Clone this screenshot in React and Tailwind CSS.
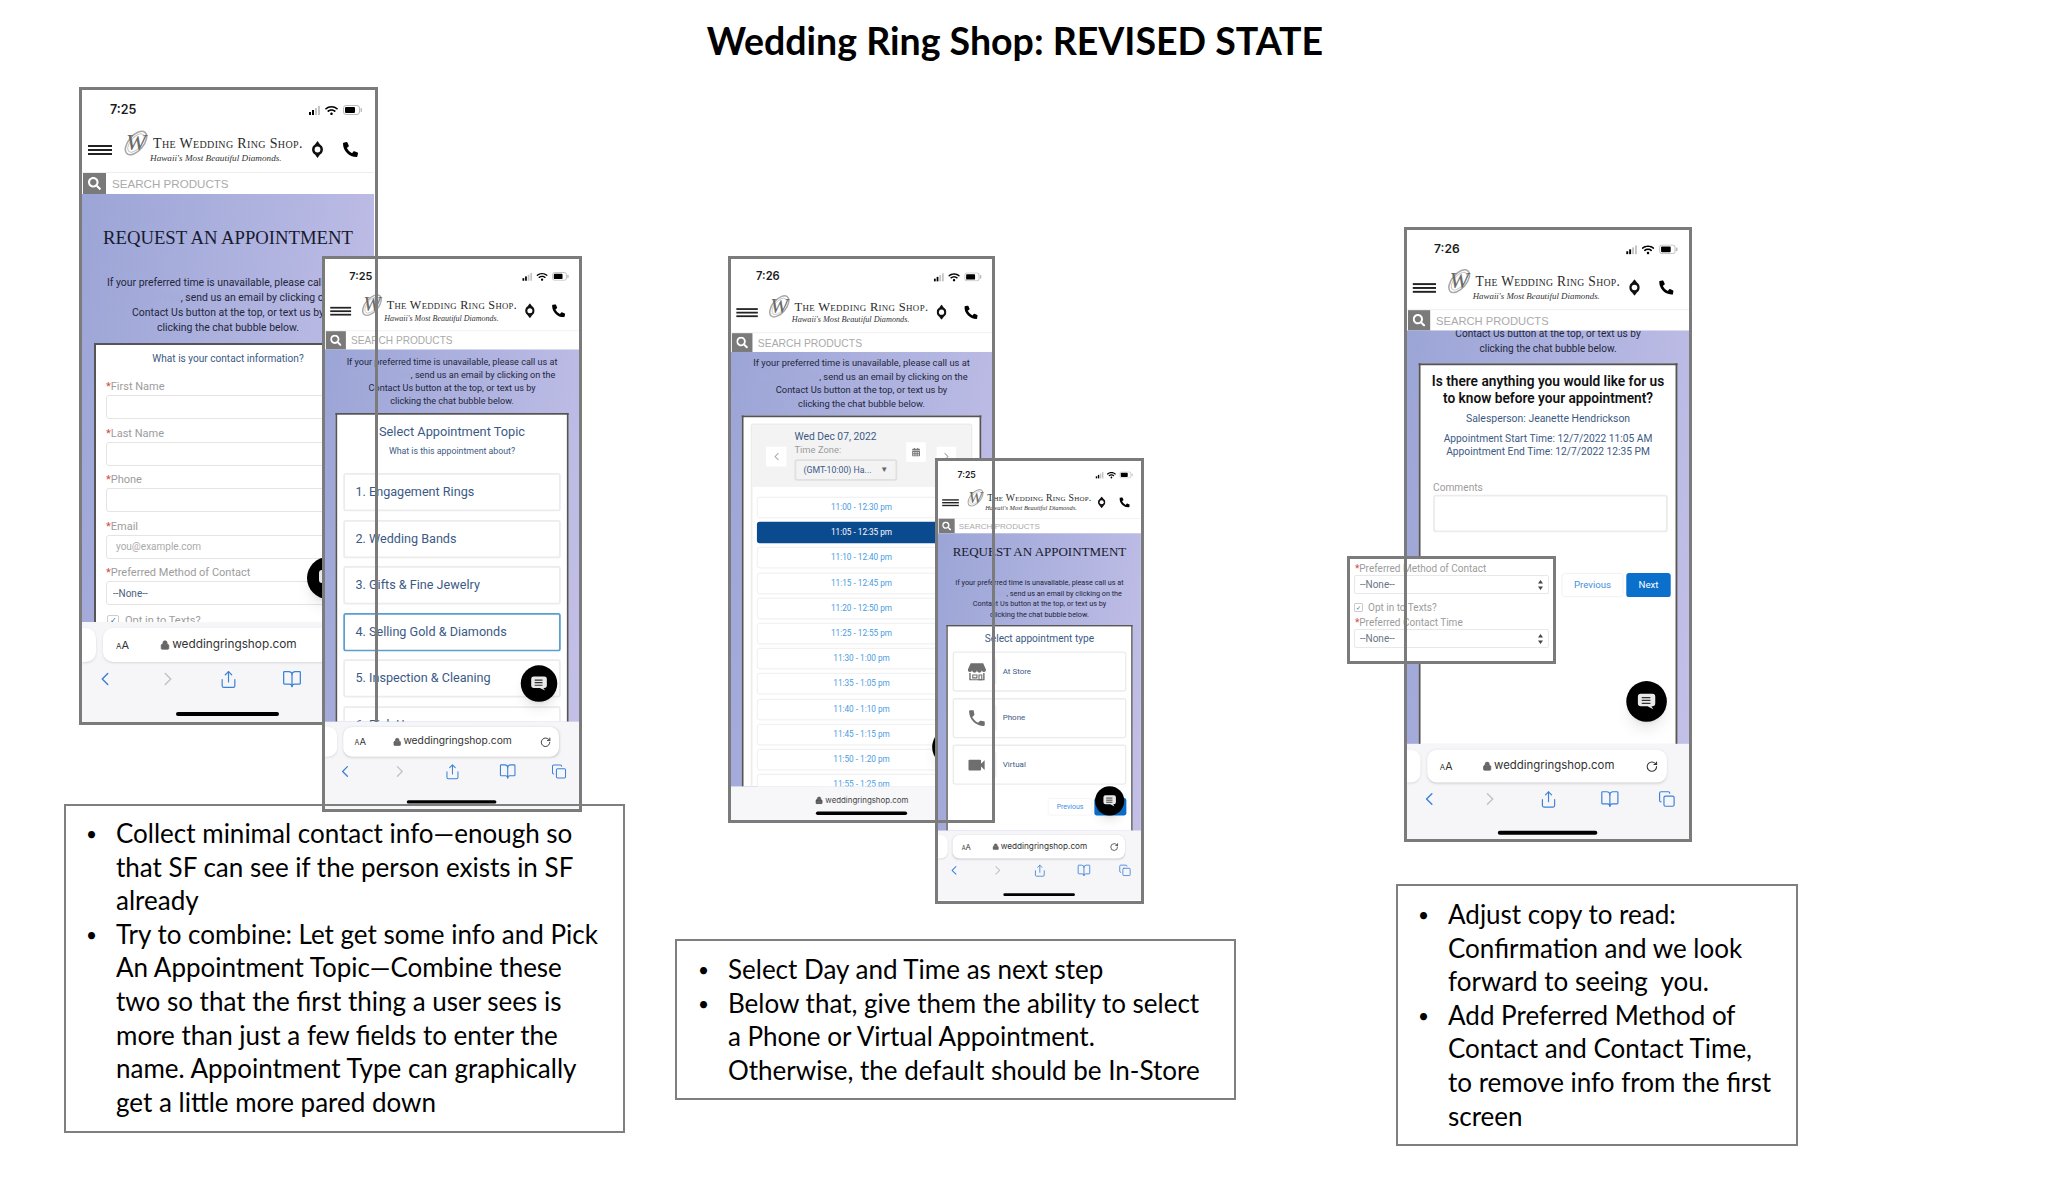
import React from "react";
import { BookOpen, ChevronLeft, ChevronRight, Copy, Lock, RotateCw, Share } from "lucide-react";
import { FaCalendarAlt, FaPhoneAlt, FaSearch, FaWifi } from "react-icons/fa";
import { MdVideocam, MdPhone } from "react-icons/md";

const topics = [
  "1. Engagement Rings",
  "2. Wedding Bands",
  "3. Gifts & Fine Jewelry",
  "4. Selling Gold & Diamonds",
  "5. Inspection & Cleaning",
  "6. Pick Up",
];

const slots = [
  "11:00 - 12:30 pm",
  "11:05 - 12:35 pm",
  "11:10 - 12:40 pm",
  "11:15 - 12:45 pm",
  "11:20 - 12:50 pm",
  "11:25 - 12:55 pm",
  "11:30 - 1:00 pm",
  "11:35 - 1:05 pm",
  "11:40 - 1:10 pm",
  "11:45 - 1:15 pm",
  "11:50 - 1:20 pm",
  "11:55 - 1:25 pm",
];

const StatusBar = ({ time }) => (
  <div className="flex h-[38px] shrink-0 items-center pl-[28px] pr-[11px] pt-[2px]">
    <span className="font-[Inter] text-[12.5px] font-semibold text-[#1c1c1e]">{time}</span>
    <div className="ml-auto flex items-center">
      <div className="flex items-end gap-[1px]">
        <div className="h-[3px] w-[2px] bg-black" />
        <div className="h-[5px] w-[2px] bg-black" />
        <div className="h-[7px] w-[2px] bg-[#c4c4c4]" />
        <div className="h-[9px] w-[2px] bg-[#c4c4c4]" />
      </div>
      <FaWifi className="ml-[5px] text-[13px] text-black" />
      <svg className="ml-[5px]" width="20" height="10" viewBox="0 0 20 10">
        <rect x="0.5" y="0.5" width="16" height="9" rx="2.5" fill="none" stroke="#bbb" />
        <rect x="2" y="2" width="10" height="6" rx="1" fill="#000" />
        <rect x="17.5" y="3" width="1.5" height="4" rx="0.7" fill="#bbb" />
      </svg>
    </div>
  </div>
);

const LogoRow = () => (
  <div className="flex h-[44px] shrink-0 items-start pl-[6px]">
    <div className="mt-[17px] flex w-[24px] flex-col gap-[2px]">
      <div className="h-[2px] bg-[#222]" />
      <div className="h-[2px] bg-[#222]" />
      <div className="h-[2px] bg-[#222]" />
    </div>
    <svg className="ml-[12px] mt-[2px] shrink-0" width="28" height="26" viewBox="0 0 28 26">
      <ellipse cx="12" cy="13" rx="14" ry="7.5" transform="rotate(-50 12 13)" fill="none" stroke="#a8a8a8" strokeWidth="1.6" />
      <ellipse cx="12" cy="13" rx="11" ry="5.5" transform="rotate(-50 12 13)" fill="none" stroke="#c8c8c8" strokeWidth="1" />
      <text x="2" y="20" fontFamily="Liberation Serif" fontStyle="italic" fontSize="24" fill="#6a6a6a">W</text>
    </svg>
    <div className="ml-[1px] mt-[7px] flex w-[158px] flex-col whitespace-nowrap font-['Liberation_Serif',serif]">
      <span className="text-[14px] leading-[18px] tracking-[0.35px] text-[#2a2a2a] [font-variant-caps:small-caps]">
        The Wedding Ring Shop.
      </span>
      <span className="-ml-[3px] text-[9.2px] italic leading-[10px] text-[#333]">
        Hawaii's Most Beautiful Diamonds.
      </span>
    </div>
    <svg className="ml-[1px] mt-[13px] shrink-0" width="11" height="17" viewBox="0 0 12 20">
      <path d="M6 0 L9 4 A7 7 0 0 1 9 16 L6 20 L3 16 A7 7 0 0 1 3 4 Z" fill="#111" />
      <circle cx="6" cy="10" r="3.4" fill="#fff" />
    </svg>
    <FaPhoneAlt className="ml-[20px] mt-[14px] shrink-0 text-[15px] text-black" />
  </div>
);

const SearchBar = () => (
  <div className="flex h-[22px] shrink-0 items-center border-t border-[#eeeeee] bg-white">
    <div className="ml-[1px] flex h-full w-[23px] items-center justify-center bg-[#7a7a7a]">
      <FaSearch className="text-[13px] text-white" />
    </div>
    <span className="ml-[6px] pt-[1px] font-['Liberation_Sans',sans-serif] text-[11.6px] text-[#aaaaaa]">SEARCH PRODUCTS</span>
  </div>
);

const BottomBar = () => (
  <div className="relative h-[100px] shrink-0 bg-[#f6f6f9] pt-[6px]">
    <div className="flex h-[34px]">
      <div className="h-full w-[14px] rounded-r-[10px] bg-white shadow-sm" />
      <div className="ml-[7px] flex w-[248px] items-center rounded-[10px] bg-white font-[Inter] shadow-sm">
        <span className="ml-[13px] flex items-baseline text-[#333]">
          <span className="text-[8px]">A</span>
          <span className="text-[11px]">A</span>
        </span>
        <Lock className="ml-[31px] text-[#666]" size={10} fill="#666" />
        <span className="ml-[2px] text-[11.8px] text-[#333]">weddingringshop.com</span>
        <RotateCw className="ml-auto mr-[9px] text-[#333]" size={13} />
      </div>
    </div>
    <div className="mt-[6px] flex items-center justify-between pl-[12px] pr-[14px] text-[#3b82d6]">
      <ChevronLeft size={22} strokeWidth={1.6} />
      <ChevronRight className="text-[#c2c2c6]" size={22} strokeWidth={1.6} />
      <Share className="mr-[3px]" size={19} strokeWidth={1.5} />
      <BookOpen size={20} strokeWidth={1.5} />
      <Copy size={18} strokeWidth={1.6} />
    </div>
    <div className="absolute bottom-[6px] left-[94px] h-[4px] w-[103px] rounded-full bg-black" />
  </div>
);

const ShortBottomBar = () => (
  <div className="flex h-[38px] shrink-0 flex-col items-center bg-[#f7f7fa] pt-[9px]">
    <div className="flex items-center font-[Inter] text-[#444]">
      <Lock size={9} fill="#666" />
      <span className="ml-[3px] text-[8.8px]">weddingringshop.com</span>
    </div>
    <div className="mt-[6px] h-[4px] w-[102px] rounded-full bg-black" />
  </div>
);

const Bubble = ({ className }) => (
  <div className={`absolute flex h-[42px] w-[42px] items-center justify-center rounded-full bg-black shadow-lg ${className}`}>
    <svg width="20" height="18" viewBox="0 0 20 18">
      <path d="M4 1 H16 A3 3 0 0 1 19 4 V11 A3 3 0 0 1 16 14 H15 L17 17 L11 14 H4 A3 3 0 0 1 1 11 V4 A3 3 0 0 1 4 1 Z" fill="#e9e9e9" />
      <path d="M5 5 H14 M5 8 H14 M5 11 H14" stroke="#333" strokeWidth="1.3" />
    </svg>
  </div>
);

const StoreIcon = () => (
  <svg width="28" height="26" viewBox="0 0 28 26">
    <path d="M5 1 H23 L27 10 A3 3 0 0 1 21 11 A3.5 3.5 0 0 1 14 11 A3.5 3.5 0 0 1 7 11 A3 3 0 0 1 1 10 Z" fill="#6e6e6e" />
    <path d="M4 15 V25 H24 V15" fill="none" stroke="#6e6e6e" strokeWidth="2" />
    <path d="M8 18 H14 V22 H8 Z M17 18 H21 V25 H17 Z" fill="none" stroke="#6e6e6e" strokeWidth="1.6" />
  </svg>
);

const Screen = ({ className, time, children, short }) => (
  <div className={`absolute flex origin-top-left flex-col overflow-hidden bg-white ${className}`}>
    <StatusBar time={time} />
    <LogoRow />
    <SearchBar />
    <div className="relative flex min-h-0 flex-1 flex-col overflow-hidden bg-[linear-gradient(100deg,#9ba5d6,#c3c0e8)]">
      {children}
    </div>
    {short ? <ShortBottomBar /> : <BottomBar />}
  </div>
);

const Intro = ({ className }) => (
  <p className={`shrink-0 whitespace-nowrap text-center font-[Roboto] text-[10.45px] leading-[15px] text-[#23263c] ${className}`}>
    If your preferred time is unavailable, please call us at
    <br />
    <span className="text-[#a4abd9]">(808) 945-7766</span>, send us an email by clicking on the
    <br />
    Contact Us button at the top, or text us by
    <br />
    clicking the chat bubble below.
  </p>
);

const Heading = ({ className }) => (
  <h2 className={`shrink-0 whitespace-nowrap text-center font-['Liberation_Serif',serif] text-[18.7px] leading-[22px] text-[#171a30] ${className}`}>
    REQUEST AN APPOINTMENT
  </h2>
);

const Card = ({ className, children }) => (
  <div className={`mx-[12px] min-h-0 flex-1 border-2 border-b-0 border-[#555555] bg-white font-[Roboto] text-[#3c5a85] ${className}`}>
    {children}
  </div>
);

const Field = ({ label, placeholder, value }) => (
  <div>
    <div className="h-[14px] text-[11px] leading-[14px] text-[#9c9c9c]">
      <span className="text-[#d14a4a]">*</span>
      {label}
    </div>
    <div className="mt-[1px] flex h-[24px] items-center rounded-[3px] border border-[#e4e4e4] bg-white pl-[9px] text-[10px] text-[#aaaaaa]">
      {placeholder}
      {value && <span className="-ml-[3px] text-[10px] text-[#4c5f7c]">{value}</span>}
    </div>
  </div>
);

const PagerButtons = ({ className }) => (
  <div className={`flex justify-end gap-[3px] text-[10px] ${className}`}>
    <div className="flex h-[25px] w-[64px] items-center justify-center rounded-[3px] border border-[#f0f0f0] bg-white text-[#3f8fdc]">Previous</div>
    <div className="flex h-[25px] w-[46px] items-center justify-center rounded-[3px] bg-[#0b70cc] text-white">Next</div>
  </div>
);

const TypeRow = ({ icon, label }) => (
  <div className="flex h-[58px] items-center rounded-[4px] border-2 border-[#ececec] bg-white">
    <div className="flex w-[59px] justify-center pl-[6px] text-[#6e6e6e]">{icon}</div>
    <div className="h-[36px] border-l-2 border-[#f0f0f0]" />
    <span className="ml-[9px] text-[11.5px] text-[#3c5a85]">{label}</span>
  </div>
);

const UpDown = () => (
  <svg width="5" height="10" viewBox="0 0 5 10">
    <path d="M2.5 0 L5 3.5 H0 Z M2.5 10 L5 6.5 H0 Z" fill="#444" />
  </svg>
);

const TextBox = ({ className, items }) => (
  <div className={`absolute border-2 border-[#7f7f7f] font-[Lato] text-[26px] leading-[33.6px] text-black ${className}`}>
    {items.map((lines) => (
      <div key={lines[0]} className="flex">
        <span className="w-[30px] shrink-0 text-[19px]">•</span>
        <div className="whitespace-pre">
          {lines.map((line) => (
            <div key={line}>{line}</div>
          ))}
        </div>
      </div>
    ))}
  </div>
);

const Frame = ({ className }) => <div className={`absolute border-[3px] border-[#7b7b7b] ${className}`} />;

export default function App() {
  return (
    <div className="relative h-[1198px] w-[2064px] overflow-hidden bg-white">
      <h1 className="w-[2030px] pt-[16px] text-center font-[Lato] text-[37.5px] font-bold leading-[50px] text-black">
        Wedding Ring Shop: REVISED STATE
      </h1>

      {/* contact info phone with the topic phone over it */}
      <Screen className="left-[82px] top-[90px] h-[632px] w-[292px]" time="7:25">
        <Heading className="pt-[33px]" />
        <Intro className="mt-[26px]" />
        <Card className="mt-[8px] px-[10px] pt-[7px]">
          <div className="text-center text-[10.1px] leading-[14px]">What is your contact information?</div>
          <div className="mt-[14px] flex flex-col gap-[7.5px]">
            <Field label="First Name" />
            <Field label="Last Name" />
            <Field label="Phone" />
            <Field label="Email" placeholder="you@example.com" />
            <Field label="Preferred Method of Contact" value="--None--" />
          </div>
          <div className="ml-[1px] mt-[8px] flex items-center text-[11px] text-[#9c9c9c]">
            <div className="flex h-[12px] w-[12px] items-center justify-center rounded-[2px] border border-[#cccccc] text-[8px] text-[#2f5d9a]">✓</div>
            <span className="ml-[6px]">Opt in to Texts?</span>
          </div>
        </Card>
        <Bubble className="left-[225px] top-[363px]" />
      </Screen>
      <Frame className="left-[79px] top-[87px] h-[638px] w-[299px]" />

      <Screen className="left-[325px] top-[259px] h-[632px] w-[292px] scale-[0.87]" time="7:25">
        <Intro className="mt-[6.5px]" />
        <Card className="mt-[6.5px] px-[7px] pt-[10px]">
          <div className="text-center text-[14.7px] leading-[18px]">Select Appointment Topic</div>
          <div className="mt-[8px] text-center text-[10.1px] leading-[12px]">What is this appointment about?</div>
          <div className="mt-[19px] flex flex-col gap-[9.5px]">
            {topics.map((topic, i) => (
              <div
                key={topic}
                className={i === 3
                  ? "flex h-[44px] items-center rounded-[3px] border-2 border-[#5a9fd0] pl-[12px] text-[14.5px]"
                  : "flex h-[44px] items-center rounded-[3px] border-2 border-[#ececec] pl-[12px] text-[14.5px]"}
              >
                {topic}
              </div>
            ))}
          </div>
        </Card>
        <Bubble className="left-[225px] top-[363px]" />
      </Screen>
      <div className="absolute left-[375px] top-[257px] h-[465px] w-[3px] bg-[#7b7b7b]" />
      <Frame className="left-[322px] top-[256px] h-[556px] w-[260px]" />

      <TextBox
        className="left-[64px] top-[804px] h-[329px] w-[561px] pl-[20px] pt-[11px]"
        items={[
          ["Collect minimal contact info—enough so", "that SF can see if the person exists in SF", "already"],
          [
            "Try to combine: Let get some info and Pick",
            "An Appointment Topic—Combine these",
            "two so that the first thing a user sees is",
            "more than just a few fields to enter the",
            "name. Appointment Type can graphically",
            "get a little more pared down",
          ],
        ]}
      />

      {/* day and time phone with the appointment type phone over it */}
      <Screen className="left-[731px] top-[259px] h-[628px] w-[292px] scale-[0.894]" time="7:26" short>
        <Intro className="mt-[4.5px]" />
        <Card className="mt-[6.5px] px-[8px] pt-[7px]">
          <div className="h-[420px] rounded-[3px] border-2 border-[#ececec]">
            <div className="flex h-[69px] items-start bg-[#f3f3f3] pl-[15px]">
              <div className="mt-[24px] flex h-[22px] w-[23px] items-center justify-center bg-white text-[#aaaaaa]">
                <ChevronLeft size={14} />
              </div>
              <div className="ml-[9px] w-[115px] pt-[5px]">
                <div className="text-[11.5px] leading-[15px]">Wed Dec 07, 2022</div>
                <div className="text-[10.5px] leading-[16px] text-[#9c9c9c]">Time Zone:</div>
                <div className="mt-[2px] flex h-[24px] items-center justify-between rounded-[3px] border-2 border-[#e0e0e0] px-[8px] text-[9.8px]">
                  (GMT-10:00) Ha...
                  <span className="text-[9px] text-[#666]">▼</span>
                </div>
              </div>
              <div className="ml-[10px] mt-[19px] flex h-[22px] w-[22px] items-center justify-center bg-white text-[#777777]">
                <FaCalendarAlt className="text-[10px]" />
              </div>
              <div className="ml-[12px] mt-[24px] flex h-[22px] w-[22px] items-center justify-center bg-white text-[#aaaaaa]">
                <ChevronRight size={14} />
              </div>
            </div>
            <div className="mt-[11px] flex flex-col gap-[4.2px] px-[5px]">
              {slots.map((slot, i) => (
                <div
                  key={slot}
                  className={i === 1
                    ? "flex h-[24px] shrink-0 items-center justify-center rounded-[3px] bg-[#0a4a8f] text-[9.2px] text-white"
                    : "flex h-[24px] shrink-0 items-center justify-center rounded-[3px] border border-[#ececec] bg-white text-[9.2px] text-[#4a9be0]"}
                >
                  {slot}
                </div>
              ))}
            </div>
          </div>
        </Card>
        <Bubble className="left-[225px] top-[421px]" />
      </Screen>

      <Screen className="left-[938px] top-[461px] h-[632px] w-[292px] scale-[0.695]" time="7:25">
        <Heading className="pt-[16px]" />
        <Intro className="mt-[26px]" />
        <Card className="mt-[8px] px-[7px] pt-[9px]">
          <div className="text-center text-[14.6px] leading-[18px]">Select appointment type</div>
          <div className="mt-[9px] flex flex-col gap-[9px]">
            <TypeRow icon={<StoreIcon />} label="At Store" />
            <TypeRow icon={<MdPhone className="text-[30px]" />} label="Phone" />
            <TypeRow icon={<MdVideocam className="text-[31px]" />} label="Virtual" />
          </div>
          <PagerButtons className="mt-[19px]" />
        </Card>
        <Bubble className="left-[226px] top-[364px]" />
      </Screen>
      <Frame className="left-[728px] top-[256px] h-[567px] w-[267px]" />
      <Frame className="left-[935px] top-[458px] h-[446px] w-[209px]" />

      <TextBox
        className="left-[675px] top-[939px] h-[161px] w-[561px] pl-[21px] pt-[12px]"
        items={[
          ["Select Day and Time as next step"],
          [
            "Below that, give them the ability to select",
            "a Phone or Virtual Appointment.",
            "Otherwise, the default should be In-Store",
          ],
        ]}
      />

      {/* confirmation phone with the moved fields pasted over it */}
      <Screen className="left-[1407px] top-[230px] h-[632px] w-[292px] scale-[0.966]" time="7:26">
        <Intro className="-mt-[34.5px]" />
        <Card className="mt-[8.5px] pt-[7px]">
          <div className="text-center text-[14.2px] font-semibold leading-[18px] text-[#111111]">
            Is there anything you would like for us
            <br />
            to know before your appointment?
          </div>
          <div className="mt-[6px] text-center text-[10.8px] leading-[14px]">Salesperson: Jeanette Hendrickson</div>
          <div className="mt-[6px] text-center text-[10.6px] leading-[14px]">
            Appointment Start Time: 12/7/2022 11:05 AM
            <br />
            Appointment End Time: 12/7/2022 12:35 PM
          </div>
          <div className="ml-[13px] mt-[23px] text-[10.5px] leading-[14px] text-[#9c9c9c]">Comments</div>
          <div className="ml-[13px] mr-[8px] h-[39px] rounded-[3px] border-2 border-[#ececec]" />
          <PagerButtons className="mt-[42px] pr-[5px]" />
        </Card>
        <Bubble className="left-[227px] top-[363px]" />
      </Screen>

      <div className="absolute left-[1350px] top-[559px] h-[102px] w-[203px] bg-white px-[4px] pt-[4px] font-[Roboto] text-[10px] text-[#9c9c9c]">
        <div className="pl-[1px] leading-[12px]">
          <span className="text-[#d14a4a]">*</span>Preferred Method of Contact
        </div>
        <div className="flex h-[19px] items-center justify-between rounded-[2px] border border-[#e8e8e8] pl-[5px] pr-[5px] text-[#6a7487]">
          --None--
          <UpDown />
        </div>
        <div className="mt-[7px] flex h-[12px] items-center">
          <div className="flex h-[9px] w-[9px] items-center justify-center rounded-[1px] border border-[#cccccc] text-[6px] text-[#2f5d9a]">✓</div>
          <span className="ml-[5px]">Opt in to Texts?</span>
        </div>
        <div className="mt-[4px] pl-[1px] leading-[12px]">
          <span className="text-[#d14a4a]">*</span>Preferred Contact Time
        </div>
        <div className="flex h-[19px] items-center justify-between rounded-[2px] border border-[#e8e8e8] pl-[5px] pr-[5px] text-[#6a7487]">
          --None--
          <UpDown />
        </div>
      </div>
      <Frame className="left-[1404px] top-[227px] h-[615px] w-[288px]" />
      <Frame className="left-[1347px] top-[556px] h-[108px] w-[209px]" />

      <TextBox
        className="left-[1396px] top-[884px] h-[262px] w-[402px] pl-[20px] pt-[12px]"
        items={[
          ["Adjust copy to read:", "Confirmation and we look", "forward to seeing  you."],
          [
            "Add Preferred Method of",
            "Contact and Contact Time,",
            "to remove info from the first",
            "screen",
          ],
        ]}
      />
    </div>
  );
}
